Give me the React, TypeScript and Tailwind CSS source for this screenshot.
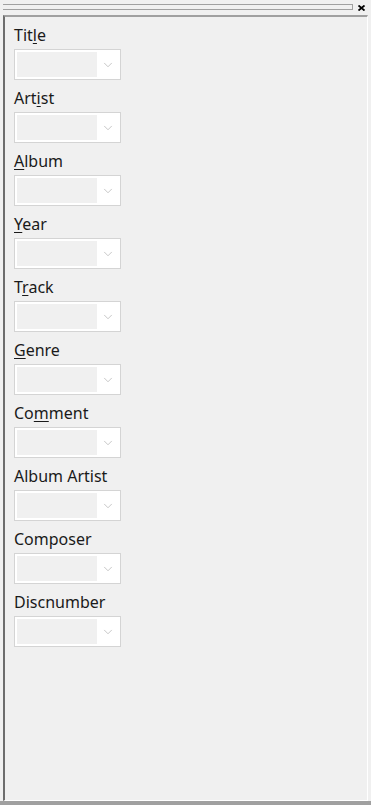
import { ChevronDown } from 'lucide-react';

const fields: { label: string; u?: number }[] = [
  { label: 'Title', u: 3 },
  { label: 'Artist', u: 3 },
  { label: 'Album', u: 0 },
  { label: 'Year', u: 0 },
  { label: 'Track', u: 1 },
  { label: 'Genre', u: 0 },
  { label: 'Comment', u: 2 },
  { label: 'Album Artist' },
  { label: 'Composer' },
  { label: 'Discnumber' },
];

function Label({ label, u }: { label: string; u?: number }) {
  if (u === undefined) return <span>{label}</span>;
  return (
    <span>
      {label.slice(0, u)}
      <span className="underline underline-offset-2">{label[u]}</span>
      {label.slice(u + 1)}
    </span>
  );
}

function Combo() {
  return (
    <div className="flex h-[31px] w-[107px] items-center border border-[#d4d4d4] bg-white p-[2px]">
      <div className="h-full w-[80px] bg-[#f0f0f0]" />
      <div className="flex flex-1 items-center justify-center">
        <ChevronDown className="h-[14px] w-[14px] text-[#b0b0b0]" strokeWidth={1.2} />
      </div>
    </div>
  );
}

export default function App() {
  return (
    <div
      className="flex h-[805px] w-[371px] flex-col bg-[#f0f0f0] text-[#1a1a1a]"
      style={{ fontFamily: '"Segoe UI", "Noto Sans", sans-serif' }}
    >
      {/* Grip bar */}
      <div className="flex h-[15px] items-start pl-[3px] pr-[6px] pt-[4px]">
        <div className="flex h-[6px] flex-1 flex-col justify-between border-r border-[#a0a0a0]">
          <div className="h-[1px] bg-[#a0a0a0]" />
          <div className="h-[1px] bg-[#a0a0a0]" />
        </div>
        <svg className="ml-[5px] mt-[1px]" width="7" height="6" viewBox="0 0 7 6">
          <path d="M0.5 0.5 L6.5 5.5 M6.5 0.5 L0.5 5.5" stroke="black" strokeWidth="1.8" />
        </svg>
      </div>

      {/* Panel */}
      <div className="ml-[3px] mr-[3px] flex flex-1 flex-col border-l-2 border-t-2 border-r border-b border-l-[#6d6d6d] border-t-[#a0a0a0] border-r-white border-b-white px-[9px] pt-[7px]">
        {fields.map((f) => (
          <div key={f.label} className="flex h-[63px] flex-col">
            <div className="mb-[3px] text-[16px] leading-[22px]">
              <Label label={f.label} u={f.u} />
            </div>
            <Combo />
          </div>
        ))}
      </div>
      <div className="h-[4px] bg-[#a0a0a0]" />
    </div>
  );
}
